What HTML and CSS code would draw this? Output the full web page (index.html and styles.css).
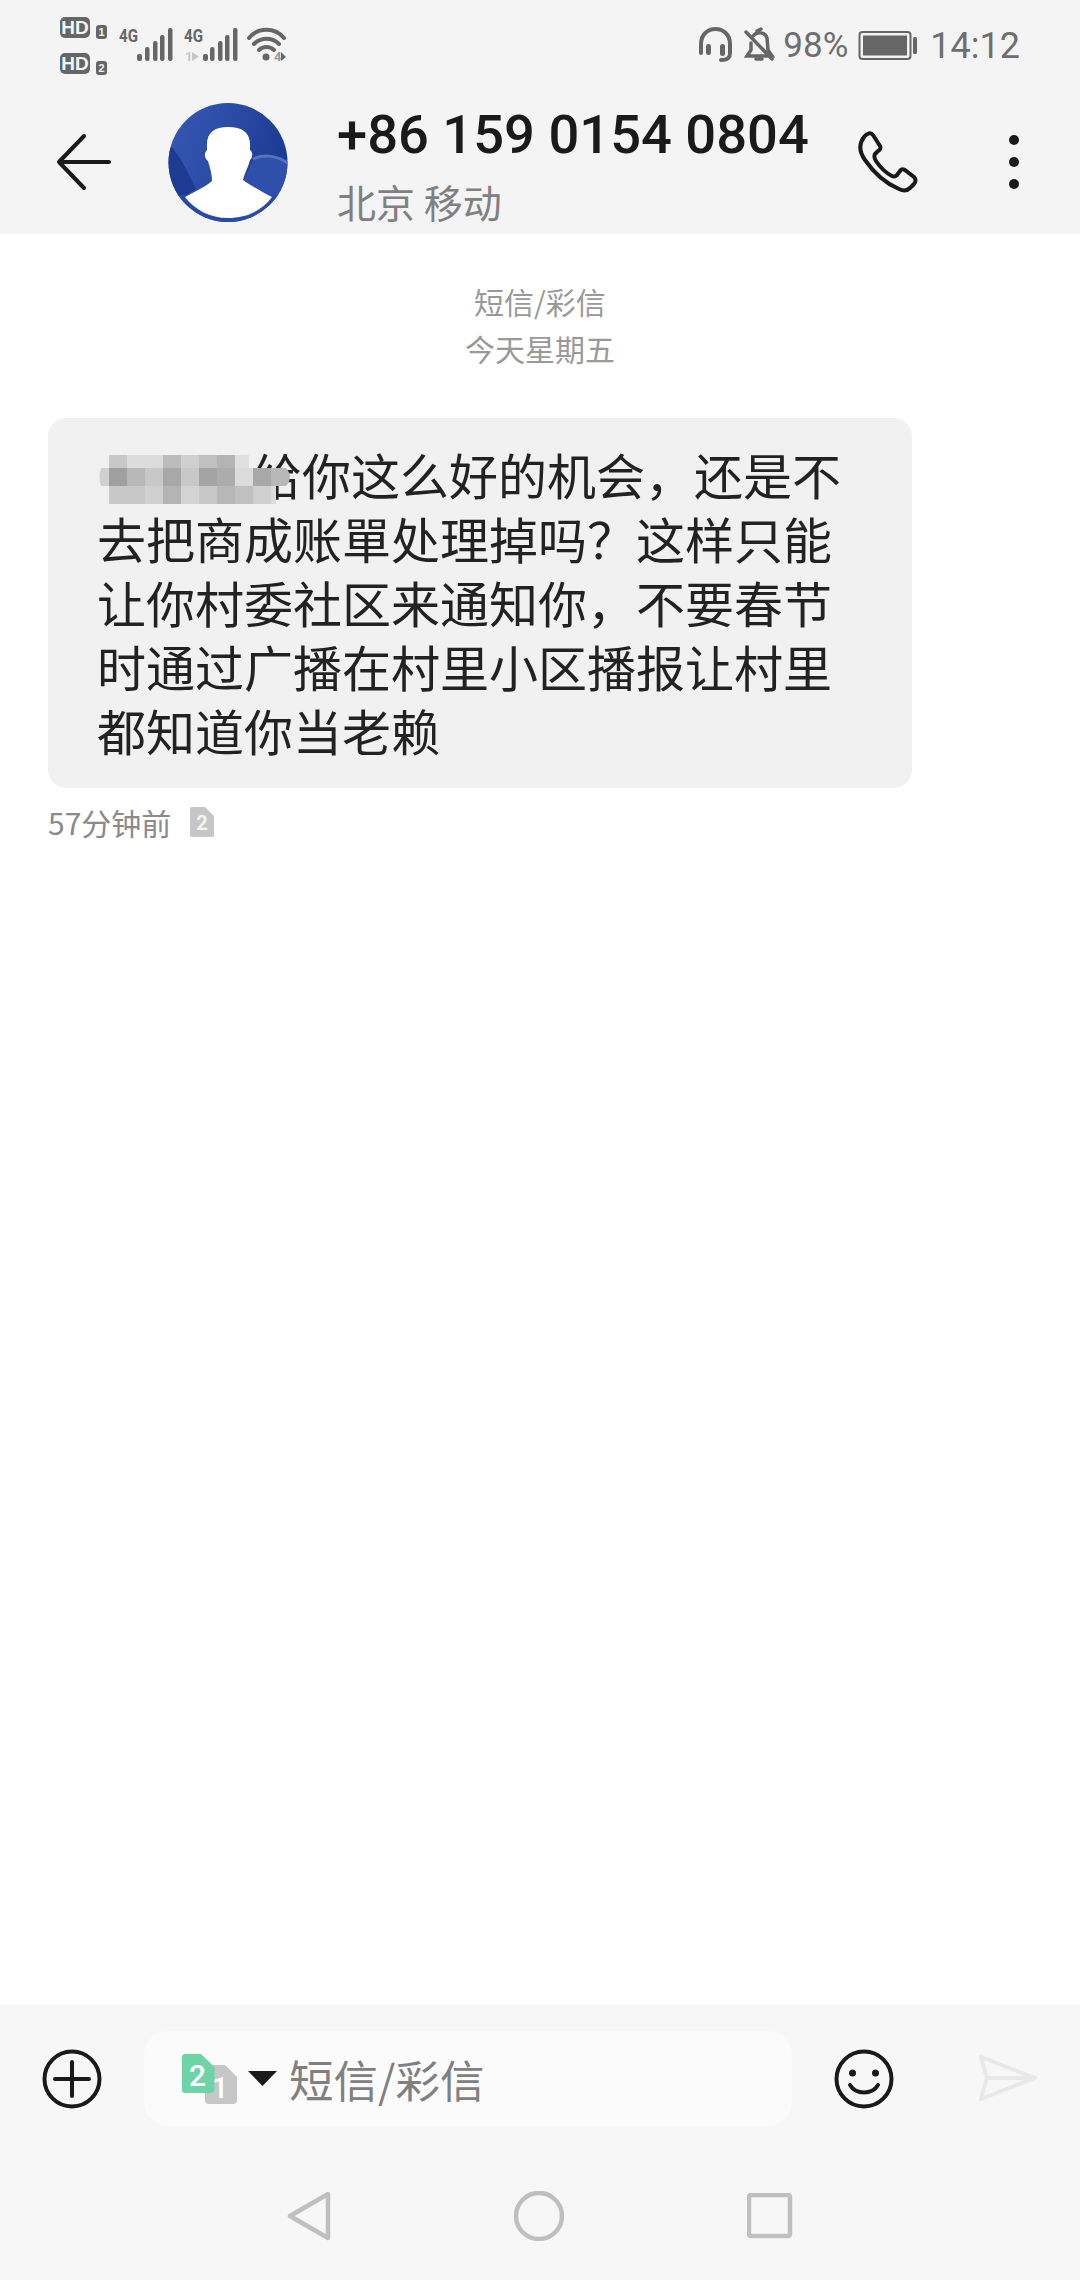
FILE: index.html
```html
<!DOCTYPE html>
<html lang="zh-CN">
<head>
<meta charset="utf-8">
<title>短信</title>
<link rel="stylesheet" href="styles.css">
</head>
<body>
<div class="page">
  <header class="top">
    <div class="status">
      <svg class="status-net" viewBox="58 14 232 64" width="232" height="64">
        <rect class="s-fill" x="60" y="17" width="30" height="21" rx="5"/>
        <text class="hd" x="75" y="33.500" text-anchor="middle">HD</text>
        <rect class="s-fill" x="96" y="25" width="11" height="14" rx="3"/>
        <text class="hd-n" x="101.500" y="36" text-anchor="middle">1</text>
        <rect class="s-fill" x="60" y="53" width="30" height="21" rx="5"/>
        <text class="hd" x="75" y="69.500" text-anchor="middle">HD</text>
        <rect class="s-fill" x="96" y="61" width="11" height="14" rx="3"/>
        <text class="hd-n" x="101.500" y="72" text-anchor="middle">2</text>
        <text class="g4" x="119" y="42" textLength="19" lengthAdjust="spacingAndGlyphs">4G</text>
        <g class="s-fill">
          <rect x="137" y="54" width="5" height="7" rx="2"/><rect x="145" y="47" width="4.500" height="14" rx="2"/><rect x="153" y="41" width="4.500" height="20" rx="2"/><rect x="160" y="35" width="4.500" height="26" rx="2"/><rect x="168" y="28" width="4.500" height="33" rx="2"/>
        </g>
        <text class="g4" x="184" y="42" textLength="19" lengthAdjust="spacingAndGlyphs">4G</text>
        <text class="up" x="185" y="61">1</text>
        <path class="dn" d="M192 52 L192 61 L199 56.500 Z"/>
        <g class="s-fill">
          <rect x="203" y="54" width="5" height="7" rx="2"/><rect x="210" y="47" width="4.500" height="14" rx="2"/><rect x="218" y="41" width="4.500" height="20" rx="2"/><rect x="225" y="35" width="4.500" height="26" rx="2"/><rect x="233" y="28" width="4.500" height="33" rx="2"/>
        </g>
        <path class="s-line" d="M249 38 C258 27 275 27 284 38"/>
        <path class="s-line" d="M254 44 C261 37 272 37 279 44"/>
        <path class="s-line" d="M259 50 C263 46 270 46 274 50"/>
        <circle class="s-fill" cx="266" cy="57" r="3.500"/>
        <text class="up-w" x="274" y="61">4</text>
        <path class="s-fill" d="M281 52 L281 61 L286 57 Z"/>
      </svg>
      <div class="status-right">
        <svg viewBox="696 26 34 38" width="34" height="38">
          <path class="s-line" d="M698 53 L698 44 C698 24 727 24 727 44 L727 53 C727 58 725 60 718 60"/>
          <rect class="s-fill" x="703" y="44" width="5" height="11" rx="2.500"/>
          <rect class="s-fill" x="717" y="44" width="5" height="12" rx="2.500"/>
        </svg>
        <svg class="bell" viewBox="738 26 32 38" width="32" height="38">
          <path class="s-line" d="M748 36 C752 31 760 32 762 38 L763 50 L767 56 L742 56 L746 50 L746 43"/>
          <path class="s-line" d="M752 31 L756 29 M751 59 L757 59 M741 32 L767 59"/>
        </svg>
        <span class="pct">98%</span>
        <svg class="batt" viewBox="849 30 60 32" width="60" height="32">
          <rect class="batt-box" x="850.500" y="32" width="51" height="27" rx="3"/>
          <rect class="s-fill" x="854" y="35.500" width="44" height="20"/>
          <rect class="s-fill" x="904" y="37" width="4" height="17" rx="1.500"/>
        </svg>
        <span class="time">14:12</span>
      </div>
    </div>
    <div class="bar">
      <svg class="i-back" viewBox="0 0 60 60" width="60" height="60">
        <path class="k-line" d="M54 30 L4 30 M29 4 L4 30 L29 56"/>
      </svg>
      <svg class="avatar" viewBox="168 102 120 120" width="120" height="120">
        <defs>
          <clipPath id="ac"><circle cx="228" cy="162.500" r="59.500"/></clipPath>
          <linearGradient id="ag" x1="0" y1="0" x2="1" y2="0.300">
            <stop class="ag1" offset="0"/><stop class="ag2" offset="0.450"/><stop class="ag3" offset="1"/>
          </linearGradient>
        </defs>
        <g clip-path="url(#ac)">
          <rect fill="url(#ag)" x="166" y="100" width="124" height="125"/>
          <path class="av-dark" d="M172 147 C182 160 190 176 196 189 L185 196 L172 202 L166 190 L166 150 Z"/>
          <path class="av-light" d="M244 180 L253 160 C263 155 279 156 290 166 L290 205 L272 198 Z"/>
          <path class="av-arc" d="M253 159 C263 154 279 155 290 165"/>
          <path class="av-rim" d="M166 195 L290 195 L290 225 L166 225 Z"/>
        </g>
        <path class="av-w" d="M207 147 C206 133 214 127 228 127 C243 127 251 133 250 147 L250 150 C253 152 253 157 250 160 C248 168 245 172 243 180 C250 185 262 192 272 197 C262 211 246 218 228 218 C210 218 195 210 185 197 C195 192 206 186 212 181 C212 174 210 168 208 161 C204 158 204 153 207 150 Z"/>
      </svg>
      <div class="who">
        <div class="num">+86 159 0154 0804</div>
        <div class="loc">北京 移动</div>
      </div>
      <svg class="i-phone" viewBox="845 129 64 66" width="64" height="66">
        <path class="k-line2" d="M853 137 C856 133 860 132 862 135 L869 146 C870 148 869 150 867 151 L864 154 C863 156 863 158 865 161 C869 167 875 173 881 176 C883 177 885 176 886 175 L889 171 C890 169 892 169 894 170 L903 177 C905 179 905 182 903 184 L899 188 C896 191 892 191 888 189 C876 184 863 173 854 160 C849 153 847 145 853 137 Z"/>
      </svg>
      <div class="more"><i></i><i></i><i></i></div>
    </div>
  </header>

  <main class="thread">
    <div class="stamp">短信/彩信<br>今天星期五</div>
    <div class="bubble">
      <span class="gap"></span>给你这么好的机会，还是不<br>去把商成账單处理掉吗<span class="q">？</span>这样只能<br>让你村委社区来通知你，不要春节<br>时通过广播在村里小区播报让村里<br>都知道你当老赖
      <svg class="mosaic" viewBox="0 0 194 50" width="194" height="50">
        <path class="m1" d="M3 13 L11 13 L11 31 L3 31 Q0 22 3 13 Z"/>
        <rect class="mc8" x="11" y="0" width="18" height="13"/><rect class="mdc" x="29" y="0" width="18" height="13"/><rect class="mdc" x="47" y="0" width="18" height="13"/><rect class="mbc" x="65" y="0" width="18" height="13"/><rect class="md0" x="83" y="0" width="18" height="13"/><rect class="mc0" x="101" y="0" width="18" height="13"/><rect class="mb4" x="119" y="0" width="18" height="13"/><rect class="me0" x="137" y="0" width="14" height="13"/>
        <rect class="ma0" x="11" y="13" width="18" height="18"/><rect class="mb8" x="29" y="13" width="18" height="18"/><rect class="mc8" x="47" y="13" width="18" height="18"/><rect class="ma8" x="65" y="13" width="18" height="18"/><rect class="mc8" x="83" y="13" width="18" height="18"/><rect class="ma4" x="101" y="13" width="18" height="18"/><rect class="mac" x="119" y="13" width="18" height="18"/><rect class="mdc" x="137" y="13" width="18" height="18"/><rect class="ma8" x="155" y="13" width="18" height="18"/><path class="mb8" d="M173 13 L188 13 Q196 22 188 31 L173 31 Z"/>
        <rect class="mc8" x="11" y="31" width="18" height="18"/><rect class="mc8" x="29" y="31" width="18" height="18"/><rect class="md0" x="47" y="31" width="18" height="18"/><rect class="mb4" x="65" y="31" width="18" height="18"/><rect class="md4" x="83" y="31" width="18" height="18"/><rect class="mc8" x="101" y="31" width="18" height="18"/><rect class="mb8" x="119" y="31" width="18" height="18"/><rect class="mc0" x="137" y="31" width="18" height="18"/><rect class="md0" x="155" y="31" width="18" height="18"/><rect class="mdc" x="173" y="31" width="5" height="18"/>
      </svg>
    </div>
    <div class="meta">
      <span>57分钟前</span>
      <svg viewBox="0 0 24 30" width="24" height="30">
        <path class="sim-g" d="M2 0 L15 0 L24 9 L24 28 Q24 30 22 30 L2 30 Q0 30 0 28 L0 2 Q0 0 2 0 Z"/>
        <text class="sim-n" x="12" y="23" text-anchor="middle">2</text>
      </svg>
    </div>
  </main>

  <footer class="foot">
    <div class="compose">
      <svg class="i-round" viewBox="0 0 60 60" width="60" height="60">
        <circle class="k-line3" cx="30" cy="30" r="27.500"/>
        <path class="k-line3" d="M13 30 L47 30 M30 13 L30 47"/>
      </svg>
      <div class="field">
        <svg class="sim" viewBox="0 0 55 54" width="55" height="54">
          <path class="sim-g" d="M26 11 L43 11 L55 23 L55 46 Q55 50 51 50 L27 50 Q23 50 23 46 L23 14 Z"/>
          <text class="sim1" x="38" y="44" text-anchor="middle">1</text>
          <path class="sim-t" d="M3 0 L19 0 L32.500 13 L32.500 35 Q32.500 39 28.500 39 L3 39 Q0 39 0 36 L0 3 Q0 0 3 0 Z"/>
          <text class="sim2" x="15.500" y="32" text-anchor="middle">2</text>
        </svg>
        <svg class="caret" viewBox="0 0 30 16" width="30" height="16"><path class="k-fill" d="M0 0 L29 0 L14.500 15 Z"/></svg>
        <span class="ph">短信/彩信</span>
      </div>
      <svg class="i-round i-smile" viewBox="0 0 60 60" width="60" height="60">
        <circle class="k-line3" cx="30" cy="30" r="27.500"/>
        <circle class="k-fill" cx="18.500" cy="24" r="3.500"/>
        <circle class="k-fill" cx="41.500" cy="24" r="3.500"/>
        <path class="k-line3" d="M16 36 C22 46 38 46 44 36"/>
      </svg>
      <svg class="i-send" viewBox="0 0 60 50" width="60" height="50">
        <path class="send" d="M3 3 L57 24 L3 45 L9 24 Z M9 24 L57 24"/>
      </svg>
    </div>
    <nav class="nav">
      <svg viewBox="0 0 44 50" width="44" height="50"><path class="nv" d="M41 3 L41 47 L3 25 Z"/></svg>
      <svg viewBox="0 0 50 50" width="50" height="50"><circle class="nv" cx="25" cy="25" r="23"/></svg>
      <svg viewBox="0 0 46 46" width="46" height="46"><rect class="nv" x="2" y="2" width="41" height="41" rx="2"/></svg>
    </nav>
  </footer>
</div>
</body>
</html>
```

FILE: styles.css
```css
* { box-sizing: border-box; }
html, body { margin: 0; padding: 0; background: #fff; }
body { font-family: "Noto Sans CJK SC", "Noto Sans", sans-serif; }
svg { display: block; flex: none; }

.page { width: 1080px; height: 2280px; display: flex; flex-direction: column; overflow: hidden; }

/* top */
.top { height: 234px; background: #f4f4f4; flex: none; }
.status { height: 90px; display: flex; justify-content: space-between; padding: 14px 60px 0 58px; }
.status-right { display: flex; align-items: flex-start; height: 60px; padding-top: 12px; color: #666; }
.status-right .bell { margin-left: 10px; }
.pct, .time { font-family: Roboto, sans-serif; font-size: 36px; font-weight: 400; line-height: 40px; color: #6e6e6e; }
.pct { font-size: 35px; margin-left: 8px; }
.batt { margin: 4px 0 0 10px; }
.time { margin-left: 12px; }
.s-fill { fill: #666; }
.s-line { fill: none; stroke: #666; stroke-width: 4; stroke-linecap: round; }
.bell .s-line { stroke-width: 3.500; }
.batt-box { fill: none; stroke: #666; stroke-width: 2; }
.hd { font: 700 19px "Liberation Sans", sans-serif; fill: #f4f4f4; }
.hd-n { font: 700 11px "Liberation Sans", sans-serif; fill: #f4f4f4; }
.g4 { font: 700 19px Roboto, sans-serif; fill: #666; }
.up { font: 700 13px Roboto, sans-serif; fill: #c8c8c8; }
.dn { fill: #c8c8c8; }
.up-w { font: 700 13px Roboto, sans-serif; fill: #999; }

.bar { height: 144px; display: flex; align-items: center; padding-left: 55px; }
.avatar { margin-left: 53px; }
.who { width: 519px; margin-left: 49px; height: 144px; padding-top: 13px; }
.num { font-family: Roboto, sans-serif; font-weight: 500; font-size: 54.300px; line-height: 64px; color: #1a1a1a; white-space: nowrap; }
.loc { font-size: 39px; line-height: 50px; margin-top: 9px; color: #808080; }
.k-line { fill: none; stroke: #1a1a1a; stroke-width: 4; stroke-linecap: round; stroke-linejoin: round; }
.k-line2 { fill: none; stroke: #1a1a1a; stroke-width: 4; stroke-linejoin: round; }
.k-line3 { fill: none; stroke: #1a1a1a; stroke-width: 4; stroke-linecap: round; }
.k-fill { fill: #1a1a1a; }
.more { display: flex; flex-direction: column; gap: 12px; margin-left: 89px; }
.more i { display: block; width: 10px; height: 10px; border-radius: 50%; background: #1a1a1a; }

.ag1 { stop-color: #3659b2; }
.ag2 { stop-color: #2d4ea8; }
.ag3 { stop-color: #1c3a92; }
.av-dark { fill: #1e3a92; }
.av-light { fill: #2f50aa; }
.av-arc { fill: none; stroke: #5672bf; stroke-width: 3; }
.av-rim { fill: #2a4aa6; }
.av-w { fill: #fff; }

/* thread */
.thread { flex: 1; background: #fff; padding: 44px 0 0 48px; }
.stamp { width: 984px; text-align: center; font-size: 30px; line-height: 47px; color: #999; }
.bubble { position: relative; width: 864px; height: 370px; margin-top: 46px; padding: 24px 0 0 49px; background: #f1f1f1; border-radius: 18px; font-size: 49px; line-height: 64px; color: #222; white-space: nowrap; }
.gap { display: inline-block; width: 156px; }
.q { font-family: "Noto Sans CJK TC", sans-serif; }
.mosaic { position: absolute; left: 50px; top: 37px; }
.m1, .md0 { fill: #d0d0d0; }
.mc8 { fill: #c8c8c8; }
.mdc { fill: #dcdcdc; }
.mbc { fill: #bcbcbc; }
.mc0 { fill: #c0c0c0; }
.mb4 { fill: #b4b4b4; }
.me0 { fill: #e0e0e0; }
.ma0 { fill: #a0a0a0; }
.mb8 { fill: #b8b8b8; }
.ma8 { fill: #a8a8a8; }
.ma4 { fill: #a4a4a4; }
.mac { fill: #acacac; }
.md4 { fill: #d4d4d4; }
.meta { display: flex; align-items: center; gap: 19px; margin-top: 18px; height: 32px; font-size: 30px; color: #8a8a8a; }
.sim-g { fill: #c6c6c6; }
.sim-n { font: 700 20px Roboto, sans-serif; fill: #f4f4f4; }

/* footer */
.foot { height: 275px; background: #f7f7f7; flex: none; display: flex; flex-direction: column; }
.compose { height: 146px; display: flex; align-items: center; padding: 1px 0 0 42px; }
.field { width: 648px; height: 95px; margin-left: 42px; background: #fbfbfb; border-radius: 24px; display: flex; align-items: center; padding-left: 38px; }
.i-smile { margin-left: 42px; }
.i-send { margin-left: 84px; }
.sim1, .sim2 { font: 500 30px Roboto, sans-serif; fill: #fff; }
.sim-t { fill: #6fd3a8; }
.sim { margin-top: 5px; }
.caret { margin-left: 11px; }
.ph { margin-left: 11px; font-size: 44.500px; line-height: 60px; color: #808080; }
.send { fill: none; stroke: #e8e8e8; stroke-width: 4; stroke-linejoin: round; }
.nav { flex: 1; display: flex; align-items: center; padding-left: 287px; gap: 183px; }
.nv { fill: none; stroke: #bfbfbf; stroke-width: 4.500; stroke-linejoin: round; }
```
